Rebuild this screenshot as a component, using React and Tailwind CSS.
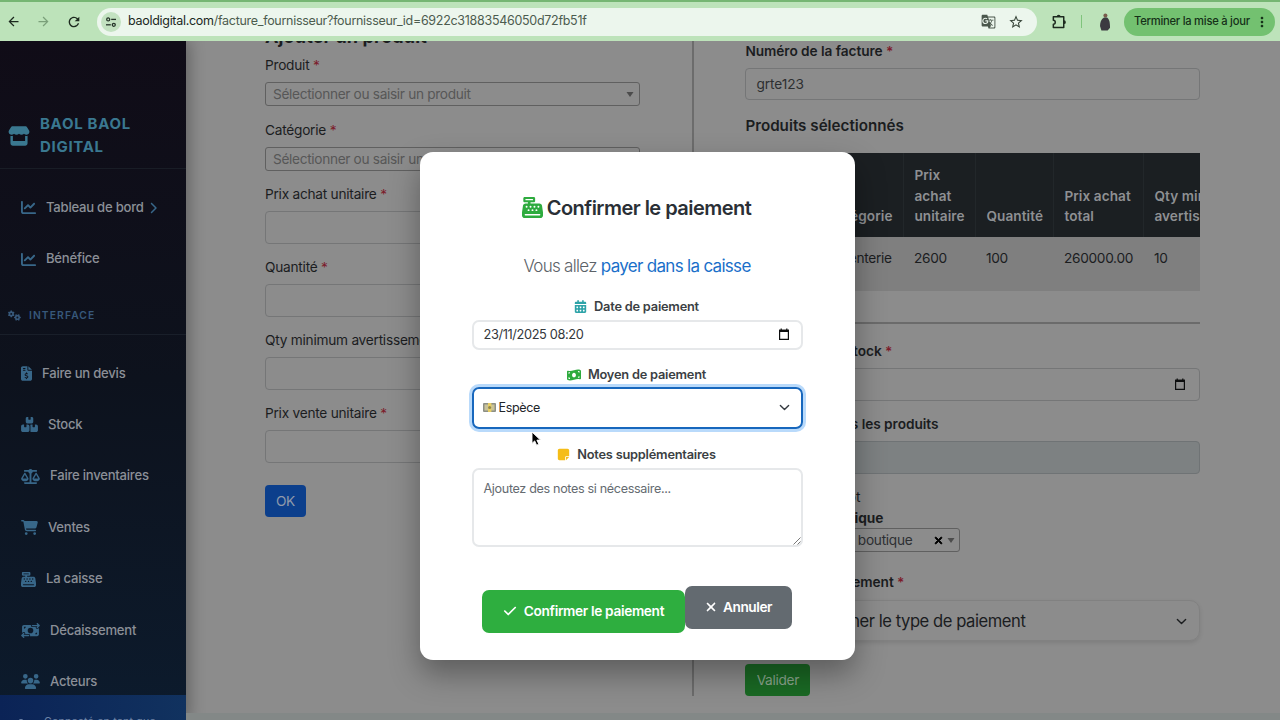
import React from "react";
import {
  FaBoxesStacked,
  FaCalendarDays,
  FaCartShopping,
  FaCashRegister,
  FaChartLine,
  FaCheck,
  FaChevronRight,
  FaFileInvoiceDollar,
  FaGears,
  FaMoneyBillTransfer,
  FaMoneyBillWave,
  FaNoteSticky,
  FaScaleBalanced,
  FaStore,
  FaUser,
  FaUsers,
  FaXmark,
} from "react-icons/fa6";
import {
  MdArrowBack,
  MdArrowForward,
  MdGTranslate,
  MdMoreVert,
  MdRefresh,
  MdStarBorder,
} from "react-icons/md";

const MENU = [
  { label: "Faire un devis", icon: FaFileInvoiceDollar, size: "w-[11px]" },
  { label: "Stock", icon: FaBoxesStacked, size: "w-[17px]" },
  { label: "Faire inventaires", icon: FaScaleBalanced, size: "w-[19px]" },
  { label: "Ventes", icon: FaCartShopping, size: "w-[17px]" },
  { label: "La caisse", icon: FaCashRegister, size: "w-[15px]" },
  { label: "Décaissement", icon: FaMoneyBillTransfer, size: "w-[19px]" },
  { label: "Acteurs", icon: FaUsers, size: "w-[19px]" },
];

const TuneIcon = () => (
  <svg width="12" height="12" viewBox="0 0 12 12" fill="none" stroke="#26352a" strokeWidth="1.3">
    <circle cx="3.2" cy="3.4" r="1.5" />
    <path d="M6.2 3.4H11" />
    <circle cx="8.8" cy="8.8" r="1.5" />
    <path d="M1 8.8H5.8" />
  </svg>
);

const PuzzleIcon = () => (
  <svg width="17" height="17" viewBox="0 0 16 16" fill="none" className="ml-[14px]">
    <path
      d="M2.2 3.6H12V13.6H2.2V10.6C4.6 10.6 4.6 6.8 2.2 6.8Z"
      stroke="#1d2a1f"
      strokeWidth="1.4"
      strokeLinejoin="round"
    />
    <path d="M5.4 3.4A1.8 1.8 0 0 1 9 3.4ZM12.2 6.8A1.8 1.8 0 0 1 12.2 10.4Z" fill="#1d2a1f" />
  </svg>
);

const DateIcon = () => (
  <svg width="12" height="13" viewBox="0 0 12 13" fill="none">
    <path d="M1.6 2.4H10.4V11.4H1.6Z" stroke="#0c0d0e" strokeWidth="1.2" />
    <path d="M1 1.8H11V4H1ZM2.6 0.6H3.8V2H2.6ZM8.2 0.6H9.4V2H8.2Z" fill="#0c0d0e" />
  </svg>
);

const ChevronDown = ({ className }) => (
  <svg width="11" height="11" viewBox="0 0 16 16" fill="none" className={className}>
    <path d="m2 5 6 6 6-6" stroke="currentColor" strokeWidth="2" strokeLinecap="round" strokeLinejoin="round" />
  </svg>
);

const Caret = ({ className }) => (
  <svg width="8" height="5" viewBox="0 0 8 5" className={className}>
    <path d="M0.5 0H7.5L4 5Z" fill="#4c4c4c" />
  </svg>
);

const BrowserBar = () => (
  <header className="relative z-10 flex h-[41px] shrink-0 items-center border-t-2 border-[#76b673] bg-[#bde3ba] text-[#1d2a1f]">
    <MdArrowBack className="ml-[6px] size-[15px]" />
    <MdArrowForward className="ml-[15px] size-[15px] text-[#7ba07a]" />
    <MdRefresh className="ml-[15px] size-4" />
    <div className="ml-[15px] flex h-7 w-[940px] items-center rounded-full bg-[#ecf6ed] pl-[4px] pr-[13px]">
      <span className="flex size-5 items-center justify-center rounded-full bg-[#c3e2c1]">
        <TuneIcon />
      </span>
      <p className="ml-[7px] whitespace-nowrap text-[12.5px] tracking-[-0.29px] text-[#4c5c4f]">
        <span className="text-[#1b281d]">baoldigital.com</span>
        /facture_fournisseur?fournisseur_id=6922c31883546050d72fb51f
      </p>
      <MdGTranslate className="ml-auto size-[15px] text-[#4a574c]" />
      <MdStarBorder className="ml-[12px] size-4 text-[#38463a]" />
    </div>
    <PuzzleIcon />
    <span className="ml-[13px] h-[13px] w-px bg-[#7fc47c]" />
    <svg width="14" height="20" viewBox="0 0 14 20" className="ml-[16px]">
      <circle cx="7.4" cy="3.4" r="2" fill="#7a5c4c" />
      <path d="M6 5.4C3 7 2.2 10 2 14L3.4 18.4H9.6L12 15.8C12 11 11.6 7 9 5.4Z" fill="#3c3a40" />
    </svg>
    <button className="ml-[12px] flex h-7 w-[151px] items-center rounded-full bg-[#73c170] pl-[10px] text-[11.2px] font-medium tracking-[-0.24px] text-[#153018]">
      <span className="whitespace-nowrap">Terminer la mise à jour</span>
      <MdMoreVert className="ml-[4px] size-4" />
    </button>
  </header>
);

const SideLink = ({ icon: Icon, size, label, children }) => (
  <a className="flex h-[51.4px] items-center pl-[21px] text-[13.1px] font-medium tracking-[-0.24px] text-[#8b8f97]">
    <Icon className={`mr-[10px] h-[15px] shrink-0 text-[#386789] ${size}`} />
    {label}
    {children}
  </a>
);

const Sidebar = () => (
  <aside className="flex w-[186px] shrink-0 flex-col overflow-hidden bg-linear-to-b from-[#100c17] via-[#0d121d] to-[#0c1b2d] shadow-[4px_0_14px_rgba(0,0,0,0.28)]">
    <div className="flex h-[128px] shrink-0 items-center border-b border-[#191d26] pl-[8px] pt-[62px] text-[#3a7890]">
      <FaStore className="h-[22px] w-[22px]" />
      <p className="ml-[10px] text-[15px] font-bold leading-[22.4px] tracking-[0.7px]">
        BAOL BAOL
        <br />
        DIGITAL
      </p>
    </div>
    <nav className="mt-[13px] shrink-0">
      <SideLink icon={FaChartLine} size="w-[15px]" label="Tableau de bord">
        <FaChevronRight className="ml-[5px] h-3 w-[8px] text-[#386789]" />
      </SideLink>
      <SideLink icon={FaChartLine} size="w-[15px]" label="Bénéfice" />
    </nav>
    <div className="flex h-[50px] shrink-0 items-center border-b border-[#191f2a] pl-[8px] pt-[12px] text-[10.3px] font-semibold tracking-[1.1px] text-[#37587a]">
      <FaGears className="mr-[8px] h-[11px] w-[13px]" />
      INTERFACE
    </div>
    <nav className="mt-[13px] h-[347px] shrink-0 overflow-hidden">
      {MENU.map((item) => (
        <SideLink key={item.label} {...item} />
      ))}
    </nav>
    <div className="flex h-[60px] shrink-0 items-start bg-linear-to-r from-[#0b2356] to-[#11325f] pl-[16px] pt-[19px] text-[10.6px] text-[#6d83a6]">
      <FaUser className="mr-[18px] mt-[5px] size-[10px]" />
      <span className="whitespace-nowrap tracking-[0.2px]">Connecté en tant que</span>
    </div>
  </aside>
);

const Required = () => <span className="text-[#7c1c2b]"> *</span>;

const Field = ({ label, required }) => (
  <label className="mb-[13px] block">
    <span className="mb-[7px] block h-5 whitespace-nowrap leading-[21px]">
      {label}
      {required && <Required />}
    </span>
    <span className="block h-[33px] rounded-[4px] border border-[#757677]" />
  </label>
);

const SearchSelect = ({ label, placeholder }) => (
  <div className="mb-[14px]">
    <p className="mb-[7px] h-5 leading-[21px]">
      {label}
      <Required />
    </p>
    <div className="flex h-6 items-center rounded-[3px] border border-[#606060] pl-[7px] pr-[5px] pt-px tracking-[-0.34px] text-[#575757]">
      {placeholder}
      <Caret className="ml-auto" />
    </div>
  </div>
);

const ProductForm = () => (
  <section className="ml-[79px] w-[375px] shrink-0 text-[13.7px] tracking-[-0.25px] text-[#1b1d1f]">
    <h2 className="-mt-[16px] mb-[6px] h-6 text-[18px] font-bold leading-6 tracking-[0.15px]">
      Ajouter un produit
    </h2>
    <SearchSelect label="Produit" placeholder="Sélectionner ou saisir un produit" />
    <SearchSelect label="Catégorie" placeholder="Sélectionner ou saisir une catégorie" />
    <div className="-mt-px">
      <Field label="Prix achat unitaire" required />
      <Field label="Quantité" required />
      <Field label="Qty minimum avertissement" required />
      <Field label="Prix vente unitaire" required />
    </div>
    <button className="mt-[9px] h-8 w-[41px] rounded-[4px] bg-[#0c3f8c] text-[#8f9aab]">OK</button>
  </section>
);

// Widths and texts of the invoice lines, the last column runs out of the wrapper
const COLUMNS = [
  { title: "Produit", value: "Porte", width: 71 },
  { title: "Catégorie", value: "Argenterie", width: 87 },
  { title: "Prix achat unitaire", value: "2600", width: 72 },
  { title: "Quantité", value: "100", width: 78 },
  { title: "Prix achat total", value: "260000.00", width: 90 },
  { title: "Qty minimum avertissement", value: "10", width: 124 },
];

const ProductsTable = () => (
  <div className="overflow-hidden">
    <table className="w-[522px] table-fixed border-collapse text-left text-[13.7px]">
      <colgroup>
        {COLUMNS.map((c) => (
          <col key={c.title} style={{ width: c.width }} />
        ))}
      </colgroup>
      <thead>
        <tr className="h-[84px] bg-[#1b1f22] text-[#8e9093]">
          {COLUMNS.map((c) => (
            <th
              key={c.title}
              className="border-l border-[#22272a] pb-[10px] pl-[10px] pr-[4px] align-bottom text-[13.6px] font-semibold leading-[20.6px] tracking-[0.08px]"
            >
              {c.title}
            </th>
          ))}
        </tr>
      </thead>
      <tbody>
        <tr className="h-[54px] bg-[#7f7f7f]">
          {COLUMNS.map((c) => (
            <td key={c.title} className="pl-[10px] pt-[11px] align-top leading-[20.6px] tracking-[-0.3px]">
              {c.value}
            </td>
          ))}
        </tr>
      </tbody>
    </table>
  </div>
);

const InvoicePanel = () => (
  <section className="ml-[51.4px] w-[455px] shrink-0 text-[13.7px] tracking-[-0.06px] text-[#1b1d1f]">
    <p className="h-5 font-semibold leading-[21px]">
      Numéro de la facture
      <Required />
    </p>
    <div className="mt-[7px] flex h-8 items-center rounded-[4px] border border-[#757677] pl-[10px] pt-px text-[#2c2f31]">
      grte123
    </div>
    <h3 className="mb-[15px] mt-[14px] h-6 text-[15.2px] font-semibold leading-6 tracking-normal">
      Produits sélectionnés
    </h3>
    <ProductsTable />
    <hr className="mt-[31px] border-t-2 border-[#6b6b6b]" />
    <p className="mt-[17px] h-5 w-[147px] whitespace-nowrap text-right font-semibold leading-[21px]">
      Date entrée stock
      <Required />
    </p>
    <div className="mt-[7px] flex h-[33px] items-center justify-end rounded-[4px] border border-[#757677] pr-[13px]">
      <DateIcon />
    </div>
    <p className="mt-[13px] h-5 w-[193px] whitespace-nowrap text-right font-semibold leading-[21px]">
      Total de tous les produits
    </p>
    <div className="mt-[7px] h-[33px] rounded-[4px] border border-[#6f7375] bg-[#7d8182]" />
    <p className="mt-[13px] h-[21px] w-[115px] text-right leading-[21px]">Dans un dépôt</p>
    <p className="h-[20px] w-[138px] whitespace-nowrap text-right font-bold leading-5">Choisir la boutique</p>
    <div className="flex h-6 w-[215px] items-center rounded-[3px] border border-[#606060] pr-[4px] pt-px tracking-[-0.3px] text-[#2e3033]">
      <span className="w-[166px] whitespace-nowrap text-right">Sélectionner une boutique</span>
      <FaXmark className="ml-auto size-[11px] stroke-[40px] text-black" />
      <Caret className="ml-[3px]" />
    </div>
    <p className="mt-[20px] h-5 w-[159px] whitespace-nowrap text-right font-semibold leading-5">
      Statut du paiement
      <Required />
    </p>
    <div className="mt-[8px] flex h-[41px] items-center rounded-[10px] border border-[#818181] pl-[10px] pr-[12px] pt-px text-[16.6px] tracking-[-0.45px] shadow-[0_2px_4px_rgba(0,0,0,0.1)]">
      <span className="w-[269px] whitespace-nowrap text-right">Sélectionner le type de paiement</span>
      <ChevronDown className="ml-auto" />
    </div>
    <button className="mt-[23px] h-8 w-[65px] rounded-[4px] bg-[#1a6924] tracking-[-0.3px] text-[#8ba58e]">
      Valider
    </button>
  </section>
);

const ModalLabel = ({ icon: Icon, color, children }) => (
  <p className="flex h-5 items-center justify-center pt-[2px] pr-px text-[12.8px] font-semibold tracking-[-0.22px] text-[#3b3f44]">
    <Icon className={`mr-[7px] ${color}`} />
    {children}
  </p>
);

const PaymentModal = () => (
  <div
    role="dialog"
    className="absolute left-[419.5px] top-[151.5px] z-20 h-[508px] w-[435px] rounded-[13px] bg-white px-[52px] pt-[40px] shadow-[0_14px_30px_rgba(0,0,0,0.34)]"
  >
    <h2 className="flex h-8 items-center justify-center whitespace-nowrap pr-px text-[20px] font-semibold tracking-[-0.53px] text-[#2a2f36]">
      <FaCashRegister className="mr-[4px] size-[21px] text-[#2eab3e]" />
      Confirmer le paiement
    </h2>
    <p className="mt-[30px] h-6 whitespace-nowrap text-center text-[17px] font-light leading-6 tracking-[-0.7px] text-[#5c6268]">
      Vous allez <span className="font-normal text-[#1a6fc9]">payer dans la caisse</span>
    </p>
    <div className="mt-[18px]">
      <ModalLabel icon={FaCalendarDays} color="size-[13px] text-[#2da3a8]">
        Date de paiement
      </ModalLabel>
      <div className="mt-[4px] flex h-[30px] items-center justify-between rounded-[7px] border-2 border-[#e6e8ea] pl-[10px] pr-[11px] text-[12.8px] tracking-[-0.38px] text-[#33373b]">
        <span className="pt-px">23/11/2025 08:20</span>
        <DateIcon />
      </div>
    </div>
    <div className="mt-[14px]">
      <ModalLabel icon={FaMoneyBillWave} color="size-[14px] text-[#2eab3e]">
        Moyen de paiement
      </ModalLabel>
      <div className="mt-[3px] flex h-[42px] items-center rounded-[7px] border-2 border-[#1767bd] pl-[9px] pr-[11px] text-[12.5px] tracking-[-0.35px] text-[#212529] ring-[3px] ring-[#b9dafb]">
        <svg width="13" height="9" viewBox="0 0 13 9" className="mr-[3px]">
          <rect width="13" height="9" rx="1" fill="#8d8f86" />
          <rect x="1.5" y="1.5" width="10" height="6" fill="#c9c39a" />
          <rect x="5" width="3.4" height="9" fill="#e8cf63" />
          <circle cx="6.6" cy="4.5" r="1.5" fill="#91864e" />
        </svg>
        <span className="pt-px">Espèce</span>
        <ChevronDown className="ml-auto text-[#343a40]" />
      </div>
    </div>
    <div className="mt-[15px]">
      <ModalLabel icon={FaNoteSticky} color="size-[13px] text-[#f5bd17]">
        Notes supplémentaires
      </ModalLabel>
      <div className="relative mt-[4px] h-[79px] rounded-[7px] border-2 border-[#e6e8ea] pl-[10px] pt-[9px] text-[12.6px] leading-5 tracking-[-0.34px] text-[#656b71]">
        Ajoutez des notes si nécessaire...
        <svg width="8" height="8" viewBox="0 0 8 8" className="absolute bottom-0 right-0">
          <path d="M0.5 7.5 7.5 0.5M4.5 7.5 7.5 4.5" stroke="#6a6a6a" strokeWidth="0.9" />
        </svg>
      </div>
    </div>
    <div className="mt-[39px] flex items-start justify-center whitespace-nowrap text-[13.7px] font-semibold tracking-[-0.35px] text-white">
      <button className="mt-[4px] flex h-[43px] w-[203px] items-center justify-center rounded-[7px] bg-[#2eae3f]">
        <FaCheck className="mr-[7px] size-[14px]" />
        Confirmer le paiement
      </button>
      <button className="flex h-[43px] w-[107px] items-center justify-center rounded-[7px] bg-[#636a70] pr-px tracking-[-0.45px]">
        <FaXmark className="mr-[5px] size-[14px]" />
        Annuler
      </button>
    </div>
  </div>
);

const Cursor = () => (
  <svg width="12" height="16" viewBox="0 0 12 16" className="absolute left-[531px] top-[431px] z-30">
    <path
      d="M1 1V12.4L3.7 9.9L5.6 14.2L7.8 13.2L5.9 9.1H9.5Z"
      fill="#000"
      stroke="#fff"
      strokeWidth="0.9"
    />
  </svg>
);

const App = () => {
  return (
    <div className="relative flex h-[720px] w-[1280px] flex-col overflow-hidden bg-[#8c8c8c] font-['Inter',sans-serif]">
      <BrowserBar />
      <div className="flex h-[679px] overflow-hidden">
        <Sidebar />
        <main className="flex flex-1 flex-col">
          <div className="flex h-[672px] shrink-0">
            <ProductForm />
            <div className="ml-[52px] h-[655px] w-[2px] shrink-0 bg-[#6c6c6c]" />
            <InvoicePanel />
          </div>
          <footer className="h-[7px] w-full bg-[#838887]" />
        </main>
      </div>
      <PaymentModal />
      <Cursor />
    </div>
  );
};

export default App;
